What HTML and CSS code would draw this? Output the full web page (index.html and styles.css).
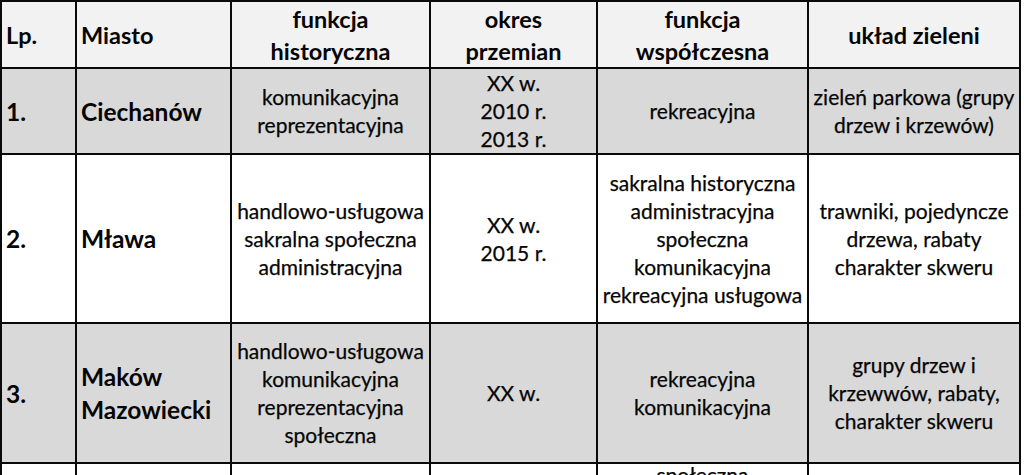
FILE: index.html
```html
<!DOCTYPE html>
<html lang="pl">
<head>
<meta charset="utf-8">
<title>Tabela</title>
<link rel="stylesheet" href="styles.css">
</head>
<body>
<table class="tbl">
  <colgroup>
    <col class="c1"><col class="c2"><col class="c3"><col class="c4"><col class="c5"><col class="c6">
  </colgroup>
  <thead>
    <tr class="head">
      <th class="left">Lp.</th>
      <th class="left">Miasto</th>
      <th>funkcja<br>historyczna</th>
      <th>okres<br>przemian</th>
      <th>funkcja<br>współczesna</th>
      <th>układ zieleni</th>
    </tr>
  </thead>
  <tbody>
    <tr class="gray r1">
      <td class="lbl">1.</td>
      <td class="lbl">Ciechanów</td>
      <td>komunikacyjna<br>reprezentacyjna</td>
      <td>XX w.<br>2010 r.<br>2013 r.</td>
      <td>rekreacyjna</td>
      <td>zieleń parkowa (grupy<br>drzew i krzewów)</td>
    </tr>
    <tr class="white r2">
      <td class="lbl">2.</td>
      <td class="lbl">Mława</td>
      <td>handlowo-usługowa<br>sakralna społeczna<br>administracyjna</td>
      <td>XX w.<br>2015 r.</td>
      <td>sakralna historyczna<br>administracyjna<br>społeczna<br>komunikacyjna<br>rekreacyjna usługowa</td>
      <td>trawniki, pojedyncze<br>drzewa, rabaty<br>charakter skweru</td>
    </tr>
    <tr class="gray r3">
      <td class="lbl">3.</td>
      <td class="lbl">Maków<br>Mazowiecki</td>
      <td>handlowo-usługowa<br>komunikacyjna<br>reprezentacyjna<br>społeczna</td>
      <td>XX w.</td>
      <td>rekreacyjna<br>komunikacyjna</td>
      <td>grupy drzew i<br>krzewwów, rabaty,<br>charakter skweru</td>
    </tr>
    <tr class="white r4">
      <td class="lbl"></td>
      <td class="lbl"></td>
      <td></td>
      <td></td>
      <td class="top">społeczna</td>
      <td></td>
    </tr>
  </tbody>
</table>
</body>
</html>
```
FILE: styles.css
```css
html, body {
  margin: 0;
  padding: 0;
  background: #ffffff;
  overflow: hidden;
}
body {
  width: 1024px;
  height: 475px;
  font-family: Lato, "Liberation Sans", sans-serif;
  color: #050505;
}
.tbl {
  border-collapse: collapse;
  table-layout: fixed;
  width: 1021px;
}
.c1 { width: 75px; }
.c2 { width: 155px; }
.c3 { width: 199px; }
.c4 { width: 167px; }
.c5 { width: 211px; }
.c6 { width: 212px; }
.tbl th, .tbl td {
  border: 2px solid #0a0a0a;
  padding: 0;
  text-align: center;
  vertical-align: middle;
  white-space: nowrap;
  overflow: hidden;
}
.tbl th {
  font-weight: 700;
  font-size: 23.5px;
  line-height: 32px;
}
.tbl td {
  font-weight: 400;
  font-size: 21px;
  line-height: 28px;
  -webkit-text-stroke: 0.25px #050505;
}
.tbl .left, .tbl .lbl {
  text-align: left;
  padding-left: 4px;
}
.tbl td.lbl {
  font-weight: 700;
  font-size: 24.5px;
  line-height: 33px;
  -webkit-text-stroke: 0;
}
.tbl td.top {
  vertical-align: top;
  padding-top: 0;
  line-height: 22px;
}
.head { height: 67px; background: #f2f2f2; }
.gray { background: #d9d9d9; }
.white { background: #ffffff; }
.r1 { height: 85px; }
.r2 { height: 169px; }
.r3 { height: 140px; }
.r4 { height: 140px; }
```
